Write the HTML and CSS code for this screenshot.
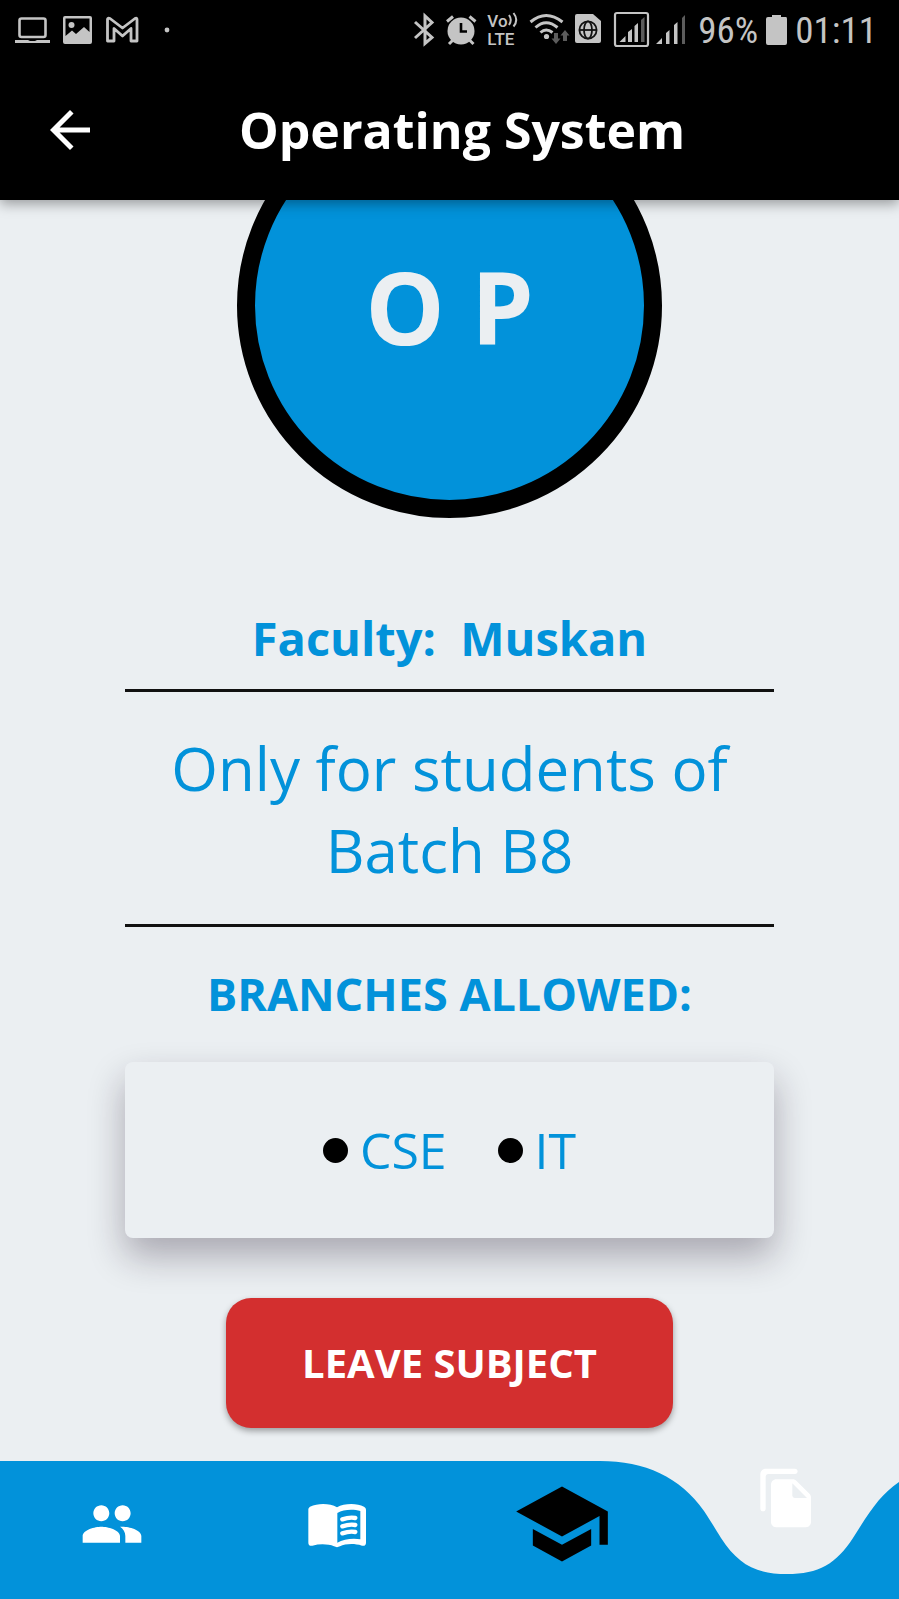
FILE: index.html
```html
<!DOCTYPE html>
<html lang="en">
<head>
<meta charset="utf-8">
<meta name="viewport" content="width=device-width, initial-scale=1">
<title>Operating System</title>
<link rel="stylesheet" href="styles.css">
</head>
<body class="screen">
<header class="top">
  <div class="status">
    <div class="status-group">
      <svg width="56" height="60" viewBox="0 0 56 60" aria-hidden="true"><rect x="19.500" y="18.500" width="26" height="18.500" rx="2" fill="none" stroke="#c4c4c4" stroke-width="2.600"/><path d="M15 40H28L30 41H35L37 40H50V43H15Z" fill="#c4c4c4"/></svg>
      <svg width="43" height="60" viewBox="56 0 43 60" aria-hidden="true"><path fill="#c4c4c4" fill-rule="evenodd" d="M65 16H90Q92 16 92 18V42Q92 44 90 44H65Q63 44 63 42V18Q63 16 65 16ZM65.500 18.500V36L72 30.500L76 34L84 27L89.500 32V18.500Z"/><circle cx="71.500" cy="25" r="3" fill="#c4c4c4"/></svg>
      <svg width="48" height="60" viewBox="99 0 48 60" aria-hidden="true"><path fill="none" stroke="#c4c4c4" stroke-width="2.800" stroke-linejoin="round" d="M107.500 41V19.500Q107.500 17.500 110 18.500L122.500 28L135 18.500Q137 17.500 137 19.500V41H131V28.500L122.500 36L114 28.500V41Z"/></svg>
      <svg width="40" height="60" viewBox="147 0 40 60" aria-hidden="true"><circle cx="167" cy="30" r="2.400" fill="#c4c4c4"/></svg>
    </div>
    <div class="status-group">
      <svg width="33" height="60" viewBox="408 0 33 60" aria-hidden="true"><path fill="none" stroke="#c4c4c4" stroke-width="3" d="M415 22L432 37.500L425 43.500V16L432 22.500L415 38"/></svg>
      <svg width="41" height="60" viewBox="441 0 41 60" aria-hidden="true"><g fill="none" stroke="#c4c4c4" stroke-width="3"><path d="M447 21.500L453 16.500M475.500 21.500L469.500 16.500M453 40L449 44M469.500 40L473.500 44"/></g><circle cx="461" cy="31" r="13.500" fill="#c4c4c4"/><path d="M461 23V31.500H467" fill="none" stroke="#000" stroke-width="2.600"/></svg>
      <div class="volte">
        <span class="volte-row">Vo<svg width="11" height="16" viewBox="506 15 11 16" aria-hidden="true"><path fill="none" stroke="#c4c4c4" stroke-width="2" d="M507 18Q510.500 23 507 28M511.500 16Q517 23 511.500 29.500"/></svg></span>
        <span class="volte-row">LTE</span>
      </div>
      <svg width="50" height="60" viewBox="523 0 50 60" aria-hidden="true"><g fill="none" stroke="#c4c4c4" stroke-width="3"><path d="M530.500 22Q546 9 562.500 22M535.500 27.500Q546 18 557.500 27.500M540.500 32.500Q546 27.500 552.500 32.500"/></g><circle cx="546.500" cy="36.500" r="2.600" fill="#c4c4c4"/><path fill="#5c5c5c" d="M554 33H558V38.500H560.500L556 44L551.500 38.500H554ZM563 41H567V35.500H569.500L565 30L560.500 35.500H563Z"/></svg>
      <svg width="35" height="60" viewBox="573 0 35 60" aria-hidden="true"><path fill="#c4c4c4" d="M577 14H593L601 21V41Q601 43 599 43H577Q575 43 575 41V16Q575 14 577 14Z"/><g fill="none" stroke="#111" stroke-width="1.800"><circle cx="588" cy="30" r="8.600"/><ellipse cx="588" cy="30" rx="4" ry="8.600"/><path d="M579.500 30H596.500"/></g></svg>
      <svg width="45" height="60" viewBox="608 0 45 60" aria-hidden="true"><rect x="615" y="13" width="33" height="33" rx="2" fill="none" stroke="#c4c4c4" stroke-width="2.200"/><path fill="#c4c4c4" d="M619.500 42L625.500 36V42ZM628 32L632 29V42H628ZM634.500 26L638 23V42H634.500Z"/><path fill="#5c5c5c" d="M641 20L644.500 17V42H641Z"/></svg>
      <svg width="38" height="60" viewBox="653 0 38 60" aria-hidden="true"><path fill="#c4c4c4" d="M656 44L662 38V44ZM666 33L669.500 30V44H666ZM674 25L677.500 22V44H674Z"/><path fill="#5c5c5c" d="M682 18L685 15V44H682Z"/></svg>
      <span class="status-text">96%</span>
      <svg width="22" height="60" viewBox="766 0 22 60" aria-hidden="true"><path fill="#c4c4c4" d="M772 17V15H781V17H786Q787 17 787 19V43Q787 45 785 45H768Q766 45 766 43V19Q766 17 768 17Z"/></svg>
      <span class="status-text">01:11</span>
    </div>
  </div>
  <div class="appbar">
    <button class="back" type="button" aria-label="Back"><svg width="60" height="60" viewBox="0 0 24 24" fill="#fff"><path d="M20 11H7.830l5.590-5.590L12 4l-8 8 8 8 1.410-1.410L7.830 13H20v-2z"/></svg></button>
    <h1 class="title">Operating System</h1>
  </div>
</header>
<main class="content">
  <div class="avatar">O P</div>
  <section class="details">
    <h2 class="faculty">Faculty:&nbsp; Muskan</h2>
    <p class="description">Only for students of Batch B8</p>
    <h2 class="branches-title">BRANCHES ALLOWED:</h2>
    <ul class="branches">
      <li class="branch">CSE</li>
      <li class="branch">IT</li>
    </ul>
  </section>
  <button class="leave" type="button">LEAVE SUBJECT</button>
</main>
<nav class="tabs" aria-label="Main">
  <svg class="wave" viewBox="0 0 899 138" preserveAspectRatio="none" aria-hidden="true"><path fill="#0292da" d="M0 0H600C645 0 680 16 704 50C712 62 716 69 721 77C738 103 755 113 787 113C819 113 836 103 853 77C870 50 880 34 899 21V138H0Z"/></svg>
  <a class="tab" href="#people" aria-label="People"><svg width="64" height="64" viewBox="0 0 24 24" fill="#fff"><path d="M16 11c1.660 0 2.990-1.340 2.990-3S17.660 5 16 5c-1.660 0-3 1.340-3 3s1.340 3 3 3zm-8 0c1.660 0 2.990-1.340 2.990-3S9.660 5 8 5C6.340 5 5 6.340 5 8s1.340 3 3 3zm0 2c-2.330 0-7 1.170-7 3.500V19h14v-2.500c0-2.330-4.670-3.500-7-3.500zm8 0c-.29 0-.62.02-.97.05 1.160.84 1.970 1.970 1.970 3.450V19h6v-2.500c0-2.330-4.670-3.500-7-3.500z"/></svg></a>
  <a class="tab" href="#lessons" aria-label="Lessons"><svg width="60" height="46" viewBox="921 186 180 138" fill="#fff" overflow="visible"><path fill-rule="evenodd" d="M925 211Q925 206 930 203C955 192 990 193 1011 205C1032 193 1070 192 1092 203Q1098 206 1098 212V311Q1098 322 1086 320C1060 312 1035 315 1020 322Q1011 327 1002 322C985 315 960 314 937 320Q925 322 925 311ZM1012 222C1030 211 1060 210 1081 216V301C1060 297 1030 300 1012 311Z"/><path fill="none" stroke="#fff" stroke-width="13" stroke-linecap="round" d="M1027 241Q1048 234 1066 237M1027 262Q1048 255 1066 258M1027 283Q1048 276 1066 279"/></svg></a>
  <a class="tab" href="#subjects" aria-label="Subjects" aria-current="page"><svg width="100" height="100" viewBox="0 0 24 24"><path d="M5 13.180v4L12 21l7-3.820v-4L12 17l-7-3.820zM12 3L1 9l11 6 9-4.910V17h2V9L12 3z"/></svg></a>
  <a class="tab tab-raised" href="#files" aria-label="Files"><svg width="64" height="64" viewBox="0 0 24 24" fill="#fff"><path d="M15 1H4c-1.100 0-2 .9-2 2v13c0 .55.45 1 1 1s1-.45 1-1V4c0-.55.45-1 1-1h10c.55 0 1-.45 1-1s-.45-1-1-1zm.59 4.590l4.830 4.830c.37.37.58.88.58 1.410V21c0 1.100-.9 2-2 2H7.990C6.890 23 6 22.100 6 21l.01-14c0-1.100.89-2 1.990-2h6.170c.53 0 1.040.21 1.420.59z"/><path fill="#ebeff2" d="M15 12h4.500L14 6.500V11c0 .55.45 1 1 1z"/></svg></a>
</nav>
</body>
</html>
```

FILE: styles.css
```css
* {
  box-sizing: border-box;
}

.screen {
  margin: 0;
  min-height: 100vh;
  display: flex;
  flex-direction: column;
  background: #ebeff2;
  color: #0292da;
  font-family: "Open Sans", "Noto Sans", sans-serif;
}

.top {
  position: relative;
  z-index: 1;
  background: #000;
  box-shadow: 0 4px 12px rgba(0, 0, 0, 0.35);
}

.status {
  height: 60px;
  padding-right: 22px;
  display: flex;
  justify-content: space-between;
}

.status-group {
  display: flex;
  align-items: center;
}

.status-text {
  padding: 2px 8px 0 7px;
  color: #c4c4c4;
  font-family: "Roboto Condensed", "Liberation Sans Narrow", Roboto, sans-serif;
  font-size: 37px;
  line-height: 58px;
}

.status-text:last-child {
  padding-right: 0;
}

.volte {
  width: 41px;
  padding-left: 5px;
  display: flex;
  flex-direction: column;
  color: #c4c4c4;
  font-family: Roboto, sans-serif;
  font-size: 17px;
  line-height: 18px;
  font-weight: 500;
}

.volte-row {
  display: flex;
}

.appbar {
  height: 140px;
  padding: 0 75px 0 40px;
  display: flex;
  align-items: center;
}

.back {
  display: flex;
  padding: 0;
  border: 0;
  background: none;
}

.title {
  flex: 1;
  margin: 0;
  color: #fff;
  font-size: 50px;
  line-height: 68px;
  font-weight: 700;
  text-align: center;
}

.content {
  flex: 1;
  display: flex;
  flex-direction: column;
  align-items: center;
}

.avatar {
  width: 425px;
  height: 425px;
  margin-top: -107px;
  display: flex;
  align-items: center;
  justify-content: center;
  border: 18px solid #000;
  border-radius: 50%;
  background: #0292da;
  color: #ebeff2;
  font-size: 100px;
  font-weight: 700;
}

.details {
  align-self: stretch;
  margin: 87px 125px 60px;
  text-align: center;
}

.faculty,
.branches-title {
  margin: 0;
  font-weight: 700;
}

.faculty {
  font-size: 47px;
  line-height: 66px;
}

.description {
  margin: 18px 0 36px;
  padding: 35px 0 33px;
  border: solid #111;
  border-width: 3px 0;
  font-size: 60px;
  line-height: 82px;
}

.branches-title {
  font-size: 45px;
  line-height: 62px;
}

.branches {
  margin: 37px 0 0;
  padding: 53px;
  display: flex;
  justify-content: center;
  gap: 51px;
  list-style: none;
  border-radius: 8px;
  background: #ebeff2;
  box-shadow: 0 18px 36px rgba(30, 20, 40, 0.32);
}

.branch {
  display: flex;
  align-items: center;
  gap: 12px;
  font-size: 50px;
  line-height: 70px;
}

.branch::before {
  content: "";
  width: 25px;
  height: 25px;
  border-radius: 50%;
  background: #000;
}

.leave {
  padding: 36px 76px;
  border: 0;
  border-radius: 25px;
  background: #d32f2f;
  color: #fff;
  box-shadow: 0 3px 6px rgba(0, 0, 0, 0.35);
  font-family: inherit;
  font-size: 40px;
  line-height: 58px;
  font-weight: 700;
}

.tabs {
  position: relative;
  height: 138px;
  display: grid;
  grid-template-columns: repeat(4, 1fr);
}

.wave {
  position: absolute;
  inset: 0;
  width: 100%;
  height: 100%;
}

.tab {
  position: relative;
  padding-bottom: 12px;
  display: flex;
  align-items: center;
  justify-content: center;
}

.tab-raised {
  padding-bottom: 64px;
}
```
